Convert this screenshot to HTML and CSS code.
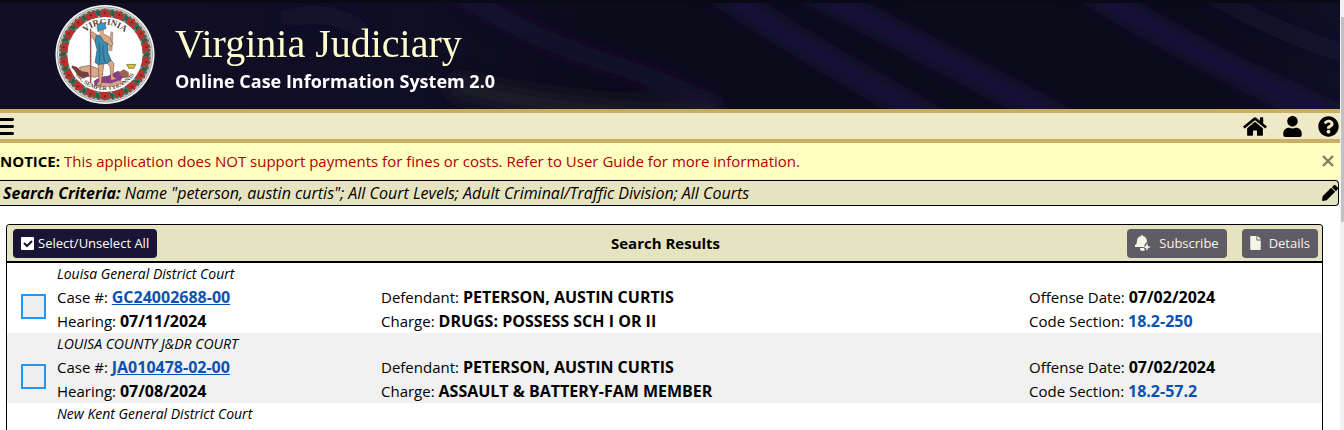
FILE: index.html
```html
<!DOCTYPE html>
<html lang="en">
<head>
  <meta charset="UTF-8">
  <title>Virginia Judiciary - Online Case Information System 2.0</title>
  <link rel="stylesheet" href="styles.css">
</head>
<body>
<div class="page">

  <!-- Banner -->
  <header class="banner">
    <svg class="banner-bg" viewBox="0 0 1340 109" preserveAspectRatio="none" aria-hidden="true">
      <defs>
        <filter id="soft" filterUnits="userSpaceOnUse" x="0" y="-60" width="1400" height="240"><feGaussianBlur stdDeviation="9"/></filter>
        <linearGradient id="base" x1="0" x2="1" y1="0" y2="0">
          <stop offset="0" stop-color="#110e26"/>
          <stop offset="0.3" stop-color="#100e24"/>
          <stop offset="0.45" stop-color="#0c0b1a"/>
          <stop offset="0.9" stop-color="#0c0b1a"/>
          <stop offset="1" stop-color="#110f24"/>
        </linearGradient>
      </defs>
      <rect width="1340" height="109" fill="url(#base)"/>
      <g filter="url(#soft)" fill="none" stroke="#1d1745" stroke-width="18">
        <path d="M430 -25Q520 35 600 60T720 110" opacity=".6"/>
        <path d="M690 -30Q780 35 960 135"/>
        <path d="M770 -30Q900 35 1090 135"/>
        <path d="M1060 -30Q1170 45 1350 125"/>
        <path d="M1170 -30Q1260 30 1380 65" opacity=".4"/>
        <path d="M280 20Q330 5 370 35" opacity=".4"/>
        <path d="M450 85Q540 110 720 118" stroke="#24242e" opacity=".8"/>
      </g>
      <rect width="1340" height="3" fill="#0a0918"/>
    </svg>

    <svg class="seal" viewBox="0 0 100 100" role="img" aria-label="Seal of Virginia">
      <defs>
        <path id="topArc" d="M20 50a30 30 0 0 1 60 0"/>
        <path id="bottomArc" d="M14 50a36 36 0 0 0 72 0"/>
        <g id="flower">
          <path d="M50 3l2 3 4-1-2 4 3 3-4 0-1 2-3-2-4 2 1-4-3-3 4-1z" fill="#b8332f"/>
          <path d="M50 6l1 2-2 1z" fill="#5b1518"/>
          <path d="M57 5l3 3-2 4-2-3z" fill="#1f5e4c"/>
          <circle cx="57" cy="12" r="1" fill="#8fb39f"/>
        </g>
      </defs>
      <circle cx="50" cy="50" r="50" fill="#f4f4f2"/>
      <circle cx="50" cy="50" r="48" fill="none" stroke="#9a9a98"/>
      <circle cx="50" cy="50" r="42" fill="none" stroke="#3a7363" stroke-width="9"/>
      <circle cx="50" cy="50" r="46" fill="none" stroke="#b9aaa2" stroke-width="2" stroke-dasharray="3 2"/>
      <use href="#flower"/>
      <use href="#flower" transform="rotate(20 50 50)"/>
      <use href="#flower" transform="rotate(40 50 50)"/>
      <use href="#flower" transform="rotate(60 50 50)"/>
      <use href="#flower" transform="rotate(80 50 50)"/>
      <use href="#flower" transform="rotate(100 50 50)"/>
      <use href="#flower" transform="rotate(120 50 50)"/>
      <use href="#flower" transform="rotate(140 50 50)"/>
      <use href="#flower" transform="rotate(160 50 50)"/>
      <use href="#flower" transform="rotate(180 50 50)"/>
      <use href="#flower" transform="rotate(200 50 50)"/>
      <use href="#flower" transform="rotate(220 50 50)"/>
      <use href="#flower" transform="rotate(240 50 50)"/>
      <use href="#flower" transform="rotate(260 50 50)"/>
      <use href="#flower" transform="rotate(280 50 50)"/>
      <use href="#flower" transform="rotate(300 50 50)"/>
      <use href="#flower" transform="rotate(320 50 50)"/>
      <use href="#flower" transform="rotate(340 50 50)"/>
      <circle cx="50" cy="50" r="38" fill="#fff"/>
      <text class="seal-text seal-top"><textPath href="#topArc" startOffset="50%" text-anchor="middle">VIRGINIA</textPath></text>
      <text class="seal-text"><textPath href="#bottomArc" startOffset="50%" text-anchor="middle">SIC SEMPER TYRANNIS</textPath></text>
      <!-- fallen figure -->
      <path d="M24 63l10-2 8 3 6 6-8 3-12-2z" fill="#d9a98a" stroke="#6e4639" stroke-width=".6"/>
      <path d="M17 61l5 2 4 4 7 1 1 4-6 2-6-3-3-5-3-3z" fill="#70413a"/>
      <path d="M39 77q6-5 14-5l10-5 7 3-5 7-10 3-15 1z" fill="#8c3e8e" stroke="#55305c" stroke-width=".6"/>
      <path d="M64 68l5-3 5 3 0 5-6 1z" fill="#9c6352"/>
      <path d="M42 78l14 1 8-3 6 2-12 4-15 0z" fill="#d7a588" stroke="#7b4f42" stroke-width=".4"/>
      <!-- spear and sword -->
      <path d="M35.500 24v55" stroke="#a4564c" stroke-width="1.500"/>
      <path d="M56 27l2 1-1 18-3 0z" fill="#c9a68c" stroke="#8f6c5b" stroke-width=".5"/>
      <!-- standing figure -->
      <path d="M43 57l1 20-3 4 5 0 3-23zM54 53l5 6-1 13 4 3-6 1-1-14-5-6z" fill="#dba887" stroke="#7b4f42" stroke-width=".6"/>
      <path d="M43 31l-6-4-2 2 5 8 5 3 6-2 5 4 2-3-4-7-6-3z" fill="#dba887" stroke="#7b4f42" stroke-width=".6"/>
      <path d="M41 31l4 0 4 6 4 2 0 9 3 8-4 3-9 1-3-2 2-13-2-7z" fill="#3b8bad" stroke="#1f4d66" stroke-width=".6"/>
      <path d="M44 38l1 10-1 10M48 41l0 9 2 8" fill="none" stroke="#205b7b" stroke-width=".8"/>
      <path d="M44 23h5l0 6-4 2z" fill="#dba887"/>
      <path d="M42 23q0-5 5-5 4 0 4 6l-5 1-3 2z" fill="#3d98bf" stroke="#1f4d66" stroke-width=".5"/>
      <path d="M72 60h9l-2 4h-5z" fill="#d6c22f" stroke="#6a5a18" stroke-width=".7"/>
    </svg>

    <div class="banner-text">
      <h1 class="title">Virginia Judiciary</h1>
      <p class="subtitle">Online Case Information System 2.0</p>
    </div>
  </header>

  <!-- Menu bar -->
  <nav class="menubar">
    <button class="icon-btn menu-btn" type="button" aria-label="Menu">
      <svg width="14" height="18" viewBox="0 0 14 18"><path d="M0 1h13l1 1v1l-1 1H0zM0 8h13l1 1v1l-1 1H0zM0 15h13l1 1v1l-1 1H0z"/></svg>
    </button>
    <div class="menu-icons">
      <a href="#" aria-label="Home"><svg width="24" height="21" viewBox="0 0 576 512"><path d="M280.370 148.260L96 300.110V464a16 16 0 0 0 16 16l112.060-.290a16 16 0 0 0 15.920-16V368a16 16 0 0 1 16-16h64a16 16 0 0 1 16 16v95.640a16 16 0 0 0 16 16.050L464 480a16 16 0 0 0 16-16V300L295.670 148.260a12.190 12.190 0 0 0-15.300 0zM571.600 251.470L488 182.560V44.050a12 12 0 0 0-12-12h-56a12 12 0 0 0-12 12v72.610L318.470 43a48 48 0 0 0-61 0L4.340 251.470a12 12 0 0 0-1.600 16.900l25.500 31A12 12 0 0 0 45.150 301l235.220-193.740a12.190 12.190 0 0 1 15.300 0L530.900 301a12 12 0 0 0 16.900-1.600l25.500-31a12 12 0 0 0-1.700-16.930z"/></svg></a>
      <a href="#" aria-label="Account"><svg width="19" height="21" viewBox="0 0 448 512"><path d="M224 256c70.700 0 128-57.300 128-128S294.700 0 224 0 96 57.300 96 128s57.300 128 128 128zm89.600 32h-16.700c-22.200 10.200-46.900 16-72.900 16s-50.600-5.800-72.900-16h-16.700C60.200 288 0 348.200 0 422.400V464c0 26.500 21.500 48 48 48h352c26.500 0 48-21.500 48-48v-41.600c0-74.200-60.200-134.400-134.400-134.400z"/></svg></a>
      <a href="#" aria-label="Help"><svg width="21" height="21" viewBox="0 0 512 512"><path d="M504 256c0 136.997-111.043 248-248 248S8 392.997 8 256C8 119.083 119.043 8 256 8s248 111.083 248 248zM262.655 90c-54.497 0-89.255 22.957-116.549 63.758-3.536 5.286-2.353 12.415 2.715 16.258l34.699 26.310c5.205 3.947 12.621 3.008 16.665-2.122 17.864-22.658 30.113-35.797 57.303-35.797 20.429 0 45.698 13.148 45.698 32.958 0 14.976-12.363 22.667-32.534 33.976C247.128 238.528 216 254.941 216 296v4c0 6.627 5.373 12 12 12h56c6.627 0 12-5.373 12-12v-1.333c0-28.462 83.186-29.647 83.186-106.667 0-58.002-60.165-102-116.531-102zM256 338c-25.365 0-46 20.635-46 46 0 25.364 20.635 46 46 46s46-20.636 46-46c0-25.365-20.635-46-46-46z"/></svg></a>
    </div>
  </nav>

  <!-- Notice -->
  <div class="notice" role="alert">
    <p><b>NOTICE:</b> <span class="notice-text">This application does NOT support payments for fines or costs. Refer to User Guide for more information.</span></p>
    <button class="icon-btn close-btn" type="button" aria-label="Close">
      <svg width="12" height="12" viewBox="0 0 12 12"><path d="M1 1l10 10M11 1l-10 10" fill="none" stroke="#7f7f60" stroke-width="2.400"/></svg>
    </button>
  </div>

  <!-- Search criteria -->
  <div class="criteria">
    <p><b>Search Criteria:</b> Name "peterson, austin curtis"; All Court Levels; Adult Criminal/Traffic Division; All Courts</p>
    <button class="icon-btn" type="button" aria-label="Edit search">
      <svg width="16" height="16" viewBox="0 0 512 512"><path d="M497.900 142.100l-46.100 46.100c-4.700 4.700-12.300 4.700-17 0l-111-111c-4.700-4.700-4.700-12.300 0-17l46.100-46.100c18.700-18.700 49.100-18.700 67.900 0l60.100 60.100c18.800 18.700 18.800 49.100 0 67.900zM284.200 99.800L21.600 362.400.400 483.900c-2.900 16.400 11.400 30.600 27.800 27.800l121.500-21.300 262.600-262.600c4.700-4.700 4.700-12.300 0-17l-111-111c-4.800-4.700-12.400-4.700-17.100 0z"/></svg>
    </button>
  </div>

  <!-- Results -->
  <main class="results">
    <div class="results-head">
      <button class="btn btn-select" type="button">
        <svg width="13" height="13" viewBox="0 0 13 13"><rect width="13" height="13" rx="1" fill="#fff"/><path d="M3 6l3 3 5-5" fill="none" stroke="#1a1536" stroke-width="2"/></svg>
        Select/Unselect All
      </button>
      <h2 class="results-title">Search Results</h2>
      <div class="actions">
        <button class="btn btn-action" type="button">
          <svg width="16" height="16" viewBox="0 0 16 16" fill="#f5f4e6"><path d="M7 0q1 0 1 1 4 1 4 6l-2 2-1 3H0v-2q2-1 2-4 0-4 4-5 0-1 1-1zM5 13h4l1 2q-1 1-3 1t-2-3z"/><path d="M12 8l1 3 3 1-3 1-1 3-1-3-3-1 3-1z"/></svg>
          Subscribe
        </button>
        <button class="btn btn-action" type="button">
          <svg width="11" height="14" viewBox="0 0 384 512" fill="#f5f4e6"><path d="M224 136V0H24C10.700 0 0 10.700 0 24v464c0 13.300 10.700 24 24 24h336c13.300 0 24-10.700 24-24V160H248c-13.200 0-24-10.800-24-24zm160-14.100v6.100H256V0h6.100c6.400 0 12.500 2.500 17 7l97.900 98c4.500 4.500 7 10.600 7 16.900z"/></svg>
          Details
        </button>
      </div>
    </div>

    <div class="case">
      <input class="case-check" type="checkbox" aria-label="Select GC24002688-00">
      <div class="case-body">
        <p class="court">Louisa General District Court</p>
        <p>Case #: <a class="case-link" href="#">GC24002688-00</a></p>
        <p>Defendant: <b>PETERSON, AUSTIN CURTIS</b></p>
        <p>Offense Date: <b>07/02/2024</b></p>
        <p>Hearing: <b>07/11/2024</b></p>
        <p>Charge: <b>DRUGS: POSSESS SCH I OR II</b></p>
        <p>Code Section: <a class="code-link" href="#">18.2-250</a></p>
      </div>
    </div>

    <div class="case">
      <input class="case-check" type="checkbox" aria-label="Select JA010478-02-00">
      <div class="case-body">
        <p class="court">LOUISA COUNTY J&amp;DR COURT</p>
        <p>Case #: <a class="case-link" href="#">JA010478-02-00</a></p>
        <p>Defendant: <b>PETERSON, AUSTIN CURTIS</b></p>
        <p>Offense Date: <b>07/02/2024</b></p>
        <p>Hearing: <b>07/08/2024</b></p>
        <p>Charge: <b>ASSAULT &amp; BATTERY-FAM MEMBER</b></p>
        <p>Code Section: <a class="code-link" href="#">18.2-57.2</a></p>
      </div>
    </div>

    <div class="case">
      <span></span>
      <div class="case-body">
        <p class="court">New Kent General District Court</p>
      </div>
    </div>
  </main>

</div>
<div class="scroll-track" aria-hidden="true"><div class="scroll-thumb"></div></div>
</body>
</html>
```
FILE: styles.css
```css
* {
  box-sizing: border-box;
}
body {
  margin: 0;
  height: 100vh;
  overflow: hidden;
  display: flex;
  background: #fff;
  color: #000;
  font-family: "Open Sans", "Noto Sans", sans-serif;
  font-size: 15px;
  line-height: 24px;
}
h1, h2, p {
  margin: 0;
}
svg {
  display: block;
  flex: none;
}
button {
  font-family: inherit;
  cursor: pointer;
}
.page {
  flex: 1;
  min-width: 0;
  display: flex;
  flex-direction: column;
}

/* banner */
.banner {
  position: relative;
  display: flex;
  gap: 20px;
  padding: 5px 55px;
  height: 109px;
  flex: none;
}
.banner-bg {
  position: absolute;
  inset: 0;
  width: 100%;
  height: 100%;
}
.seal {
  position: relative;
  width: 100px;
  height: 99px;
}
.seal-text {
  font-family: "Liberation Serif", serif;
  font-size: 6px;
  font-weight: bold;
  fill: #55433c;
}
.seal-top {
  font-size: 9px;
}
.banner-text {
  position: relative;
  padding-top: 16px;
}
.title {
  color: #ffffcc;
  font-family: "Liberation Serif", "Times New Roman", serif;
  font-size: 40px;
  font-weight: normal;
  line-height: 46px;
}
.subtitle {
  color: #fff;
  font-size: 18px;
  font-weight: bold;
  line-height: 28px;
}

/* menu bar */
.menubar {
  display: flex;
  justify-content: space-between;
  align-items: center;
  height: 34px;
  flex: none;
  background: #f0e9c8;
  border-top: 4px solid #c9ae68;
  border-bottom: 4px solid #c9ae68;
}
.icon-btn {
  display: block;
  padding: 0;
  border: 0;
  background: none;
}
.menu-icons {
  display: flex;
  align-items: center;
  gap: 16px;
  padding-right: 1px;
}

/* notice + criteria */
.notice {
  display: flex;
  justify-content: space-between;
  align-items: center;
  padding: 6px 6px 6px 0;
  background: #ffffc0;
  border-bottom: 1px solid #ffeeba;
  border-radius: 0 4px 4px 0;
}
.notice-text {
  color: #b00000;
}
.criteria {
  display: flex;
  justify-content: space-between;
  align-items: center;
  padding-left: 3px;
  margin: 0 1px 18px 0;
  background: #e6e3c0;
  border: 1px solid #000;
  border-left: 0;
  border-radius: 0 4px 4px 0;
  font-size: 16px;
  font-style: italic;
}

/* results */
.results {
  flex: 1;
  margin: 0 17px 0 6px;
  border: 1px solid #000;
  border-bottom: 0;
  border-radius: 4px 4px 0 0;
}
.results-head {
  display: grid;
  grid-template-columns: 1fr auto 1fr;
  align-items: center;
  height: 38px;
  padding: 0 4px 0 6px;
  background: #e6e3c0;
  border-bottom: 2px solid #000;
  border-radius: 3px 3px 0 0;
}
.results-title {
  font-size: 15px;
  font-weight: bold;
}
.btn {
  display: flex;
  align-items: center;
  justify-self: start;
  gap: 4px;
  height: 29px;
  padding: 0 8px;
  border: 0;
  border-radius: 4px;
  background: #1a1536;
  color: #fff;
  font-size: 13px;
}
.actions {
  display: flex;
  justify-content: flex-end;
  gap: 15px;
}
.btn-action {
  gap: 8px;
  background: #605c66;
  color: #f5f4e6;
}
.case {
  display: grid;
  grid-template-columns: 50px 1fr;
  align-items: center;
}
.case:nth-child(odd) {
  background: #f1f1f1;
}
.case-check {
  appearance: none;
  width: 25px;
  height: 25px;
  margin: 16px 0 0 14px;
  border: 2px solid #2196f3;
  background: #eee;
}
.case-body {
  display: grid;
  grid-template-columns: 324fr 648fr 293fr;
  grid-template-rows: 22px;
  grid-auto-rows: 24px;
}
.case-body b {
  font-size: 16px;
}
.court {
  grid-column: 1 / -1;
  font-size: 14px;
  font-style: italic;
  line-height: 22px;
}
.case-link, .code-link {
  color: #0b52b0;
  font-size: 16px;
  font-weight: bold;
  text-decoration: none;
}
.case-link {
  text-decoration: underline;
}

/* scrollbar strip */
.scroll-track {
  flex: none;
  width: 4px;
  padding: 17px 0 0 1px;
  background: #f1f1f1;
}
.scroll-thumb {
  height: 205px;
  background: #c1c1c1;
}
```
